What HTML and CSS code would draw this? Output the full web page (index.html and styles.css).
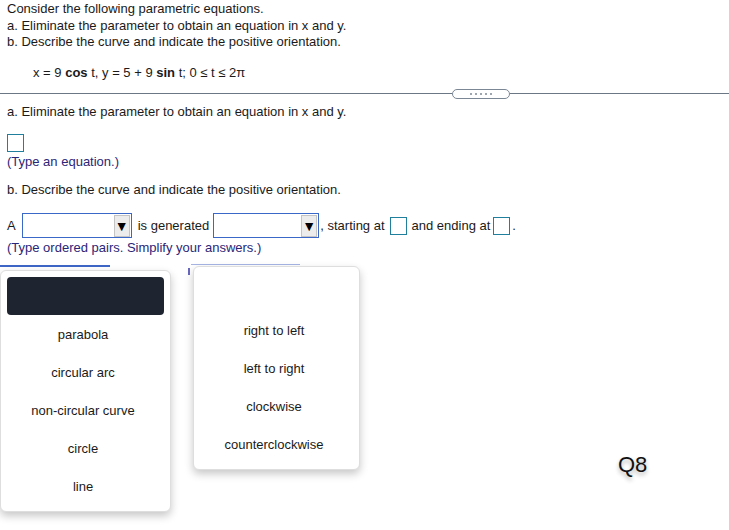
FILE: index.html
```html
<!DOCTYPE html>
<html>
<head>
<meta charset="utf-8">
<link rel="stylesheet" href="styles.css">
</head>
<body>
<div class="page">
  <section class="intro">
    <p class="line">Consider the following parametric equations.</p>
    <p class="line">a. Eliminate the parameter to obtain an equation in x and y.</p>
    <p class="line">b. Describe the curve and indicate the positive orientation.</p>
    <p class="eq">x = 9 <b>cos</b> t, y = 5 + 9 <b>sin</b> t; 0 ≤ t ≤ 2π</p>
  </section>
  <div class="divider">
    <span class="rule"></span>
    <span class="pill">
      <svg width="24" height="4" viewBox="0 0 24 4"><circle cx="2" cy="2" r="1" fill="#7c8795"/><circle cx="7" cy="2" r="1" fill="#7c8795"/><circle cx="12" cy="2" r="1" fill="#7c8795"/><circle cx="17" cy="2" r="1" fill="#7c8795"/><circle cx="22" cy="2" r="1" fill="#7c8795"/></svg>
    </span>
    <span class="rule"></span>
  </div>
  <section class="part">
    <p class="line">a. Eliminate the parameter to obtain an equation in x and y.</p>
    <div class="answer-row"><span class="box"></span></div>
    <p class="hint">(Type an equation.)</p>
    <p class="line part-b">b. Describe the curve and indicate the positive orientation.</p>
    <div class="sentence">
      <span>A</span>
      <span class="select sel1"><span class="arrow">▼</span></span>
      <span class="gen">is generated</span>
      <span class="select sel2"><span class="arrow">▼</span></span>
      <span class="comma">, starting at</span>
      <span class="box"></span>
      <span>and ending at</span>
      <span class="box box-end"></span>
      <span class="dot">.</span>
    </div>
    <p class="hint hint2">(Type ordered pairs. Simplify your answers.)</p>
  </section>
</div>

<div class="menu-edge edge1"></div>
<div class="menu-edge edge2"></div>
<div class="menu-tick"></div>

<div class="menu menu1">
  <div class="menu-head dark"></div>
  <div class="item">parabola</div>
  <div class="item">circular arc</div>
  <div class="item">non-circular curve</div>
  <div class="item">circle</div>
  <div class="item">line</div>
</div>

<div class="menu menu2">
  <div class="menu-head"></div>
  <div class="item">right to left</div>
  <div class="item">left to right</div>
  <div class="item">clockwise</div>
  <div class="item">counterclockwise</div>
</div>

<div class="qlabel">Q8</div>
</body>
</html>
```

FILE: styles.css
```css
html, body {
  margin: 0;
  padding: 0;
  background: #ffffff;
}
body {
  font-family: "Liberation Sans", Arial, sans-serif;
  font-size: 13px;
  color: #1a1a1a;
  width: 729px;
  height: 530px;
  overflow: hidden;
  position: relative;
}
p { margin: 0; }
.page {
  display: flex;
  flex-direction: column;
}
.intro {
  padding: 1px 7px 0 7px;
  display: flex;
  flex-direction: column;
}
.line {
  line-height: 16.5px;
}
.eq {
  margin-top: 13px;
  margin-left: 26px;
  line-height: 17px;
}
.eq b { font-weight: bold; }
.divider {
  display: flex;
  align-items: center;
  margin-top: 8px;
  height: 10px;
}
.rule {
  height: 1px;
  background: #6b7785;
}
.rule:first-child { width: 452px; }
.rule:last-child { flex: 1; }
.pill {
  width: 56px;
  height: 8px;
  border: 1px solid #7c8795;
  border-radius: 5px;
  display: flex;
  align-items: center;
  justify-content: center;
}
.pill svg { display: block; }
.part {
  padding: 5px 7px 0 7px;
  display: flex;
  flex-direction: column;
}
.answer-row {
  margin-top: 14px;
  display: flex;
}
.box {
  display: inline-block;
  width: 15px;
  height: 16px;
  border: 1px solid #1f7f9d;
  background: #fff;
}
.hint {
  color: #2a2678;
  line-height: 17px;
  margin-top: 1px;
}
.part-b {
  margin-top: 12px;
}
.sentence {
  margin-top: 14px;
  display: flex;
  align-items: center;
  gap: 5px;
  height: 26px;
}
.select {
  display: inline-flex;
  justify-content: flex-end;
  align-items: center;
  height: 25px;
  border: 1px solid #3a68c9;
  background: #fff;
  padding-right: 1px;
  box-sizing: border-box;
}
.sel1 { width: 110px; margin-left: 1px; }
.gen { margin-left: 1px; }
.sel2 { width: 106px; margin-left: -1px; }
.arrow {
  width: 14px;
  height: 20px;
  background: #ececec;
  border: 1px solid #c4c4c4;
  font-size: 14px;
  line-height: 20px;
  text-align: center;
  color: #000;
  overflow: hidden;
}
.comma { margin-left: -4px; }
.box-end { margin-left: -2px; }
.dot { margin-left: -3px; }
.hint2 { margin-top: 0; }

.menu-edge {
  position: absolute;
  height: 2px;
  background: #3d66c6;
}
.edge1 { left: 0; top: 265px; width: 110px; }
.edge2 { left: 191px; top: 264px; width: 109px; height: 1px; background: #a6b5e4; }
.menu-tick {
  position: absolute;
  left: 188px;
  top: 268px;
  width: 2px;
  height: 7px;
  background: #6a67c0;
}
.menu {
  position: absolute;
  background: #fff;
  border: 1px solid #dedede;
  border-radius: 6px;
  box-shadow: 0 4px 8px rgba(0, 0, 0, 0.22);
  padding: 6px 6px;
  display: flex;
  flex-direction: column;
  box-sizing: border-box;
}
.menu1 { left: 0; top: 270px; width: 171px; height: 242px; }
.menu2 { left: 193px; top: 266px; width: 167px; height: 204px; }
.menu-head {
  height: 38px;
  border-radius: 4px;
}
.menu-head.dark { background: #1e2430; }
.item {
  height: 38px;
  display: flex;
  align-items: center;
  justify-content: center;
  padding-right: 5px;
  font-size: 13px;
  color: #1a1a1a;
}
.qlabel {
  position: absolute;
  left: 618px;
  top: 453px;
  font-size: 22px;
  line-height: 24px;
  color: #111;
  text-shadow: 0 3px 4px rgba(0, 0, 0, 0.3);
}
```
